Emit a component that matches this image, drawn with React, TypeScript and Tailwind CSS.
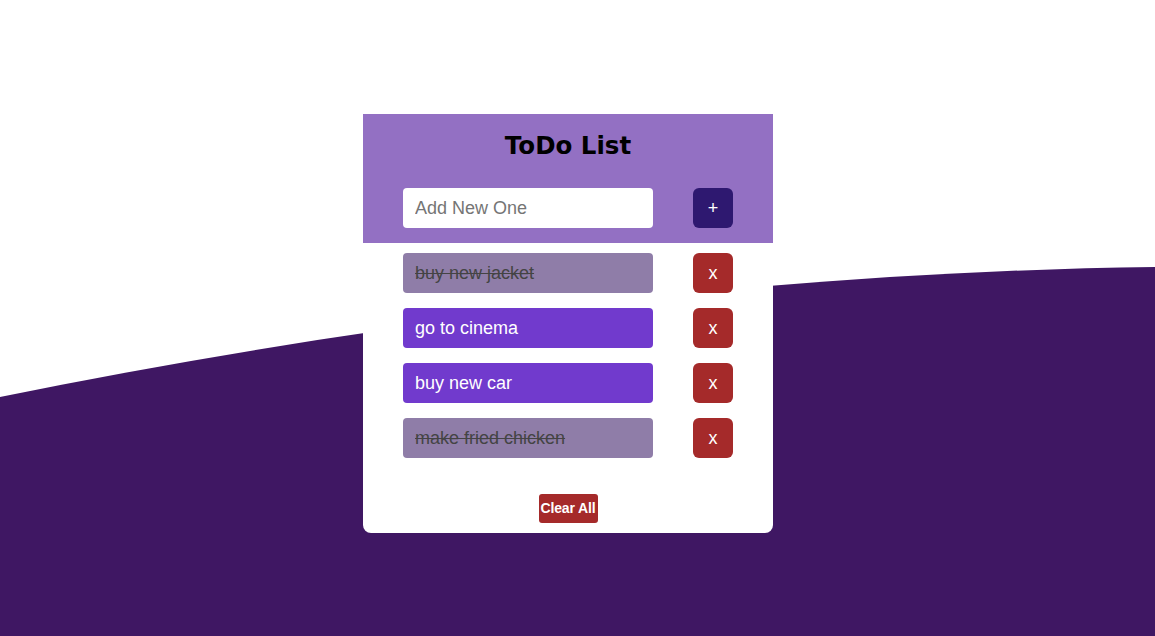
import React, { useState } from 'react';

type Todo = { id: number; text: string; done: boolean };

const initialTodos: Todo[] = [
  { id: 1, text: 'buy new jacket', done: true },
  { id: 2, text: 'go to cinema', done: false },
  { id: 3, text: 'buy new car', done: false },
  { id: 4, text: 'make fried chicken', done: true },
];

const App: React.FC = () => {
  const [todos, setTodos] = useState<Todo[]>(initialTodos);
  const [value, setValue] = useState('');

  const addTodo = () => {
    if (!value.trim()) return;
    setTodos([...todos, { id: Date.now(), text: value.trim(), done: false }]);
    setValue('');
  };

  const toggle = (id: number) =>
    setTodos(todos.map((t) => (t.id === id ? { ...t, done: !t.done } : t)));

  const remove = (id: number) => setTodos(todos.filter((t) => t.id !== id));

  return (
    <div className="relative w-full h-[636px] overflow-hidden bg-white font-['Liberation_Sans',Arial,sans-serif]">
      {/* wave background */}
      <svg className="absolute inset-0 w-full h-full" viewBox="0 0 1155 636" preserveAspectRatio="none">
        <path d="M0,397 C360,324 760,272 1155,267 L1155,636 L0,636 Z" fill="#3f1763" />
      </svg>

      <div className="relative flex justify-center pt-[114px] pr-[19px]">
        <div className="w-[410px] bg-white rounded-b-lg">
          <div className="bg-[#9370c3] pb-[15px]">
            <h1 className="h-[62px] pt-[2px] flex items-center justify-center text-[24.5px] font-bold text-black font-['DejaVu_Sans',Verdana,sans-serif]">
              ToDo List
            </h1>
            <div className="flex items-center gap-[40px] px-[40px] mt-[12px]">
              <input
                type="text"
                value={value}
                onChange={(e) => setValue(e.target.value)}
                onKeyDown={(e) => e.key === 'Enter' && addTodo()}
                placeholder="Add New One"
                className="w-[250px] h-[40px] rounded-[4px] bg-white px-[12px] text-[18px] text-black placeholder:text-[#757575] outline-none"
              />
              <button
                onClick={addTodo}
                className="w-[40px] h-[40px] rounded-[6px] bg-[#2e1870] text-white text-[18px] flex items-center justify-center"
              >
                +
              </button>
            </div>
          </div>

          <ul className="flex flex-col gap-[15px] px-[40px] pt-[10px]">
            {todos.map((t) => (
              <li key={t.id} className="flex items-center gap-[40px]">
                <div
                  onClick={() => toggle(t.id)}
                  className={
                    t.done
                      ? 'w-[250px] h-[40px] rounded-[4px] bg-[#8f7da8] px-[12px] flex items-center text-[18px] text-[#444444] line-through cursor-pointer'
                      : 'w-[250px] h-[40px] rounded-[4px] bg-[#713acd] px-[12px] flex items-center text-[18px] text-white cursor-pointer'
                  }
                >
                  {t.text}
                </div>
                <button
                  onClick={() => remove(t.id)}
                  className="w-[40px] h-[40px] rounded-[6px] bg-[#a52a2a] text-white text-[18px] flex items-center justify-center"
                >
                  x
                </button>
              </li>
            ))}
          </ul>

          <div className="flex justify-center pt-[36px] pb-[10px]">
            <button
              onClick={() => setTodos([])}
              className="w-[59px] h-[29px] rounded-[3px] bg-[#a52a2a] text-white text-[14px] font-bold flex items-center justify-center tracking-[-0.15px]"
            >
              Clear All
            </button>
          </div>
        </div>
      </div>
    </div>
  );
};

export default App;
